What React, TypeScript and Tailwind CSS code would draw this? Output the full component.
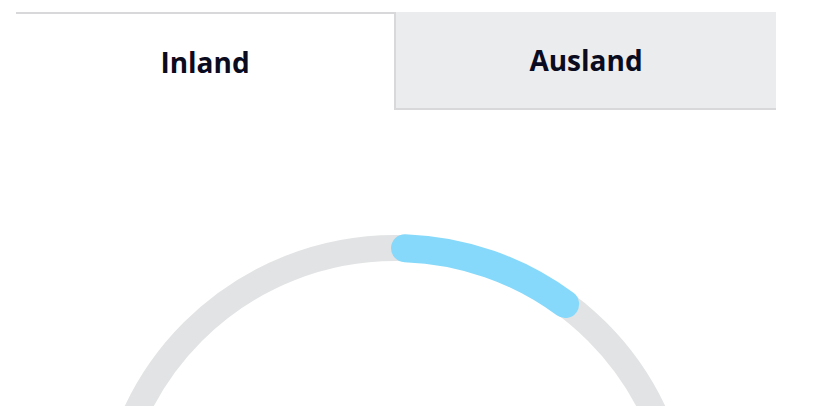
import React from "react";

export default function App() {
  return (
    <div className="w-[832px] h-[406px] overflow-hidden bg-white" style={{ fontFamily: "'Open Sans', 'Noto Sans', sans-serif" }}>
      <div className="pt-3 px-4">
        <div className="flex w-[760px] h-[98px]">
          <div className="w-[378px] border-t-2 border-[#d8d8da] bg-white flex items-center justify-center">
            <span className="text-[28px] font-bold text-[#0b0b20] leading-none">Inland</span>
          </div>
          <div className="flex-1 border-l-2 border-b-2 border-[#d8d8da] bg-[#ebecee] flex items-center justify-center">
            <span className="text-[28px] font-bold text-[#0b0b20] leading-none">Ausland</span>
          </div>
        </div>
      </div>
      <svg className="block" width="832" height="296" viewBox="0 110 832 296">
        <circle cx="395" cy="534" r="286" fill="none" stroke="#e2e3e4" strokeWidth="26" />
        <path
          d="M405 248.2 A286 286 0 0 1 565.1 304.1"
          fill="none"
          stroke="#86d9fa"
          strokeWidth="28"
          strokeLinecap="round"
        />
      </svg>
    </div>
  );
}
